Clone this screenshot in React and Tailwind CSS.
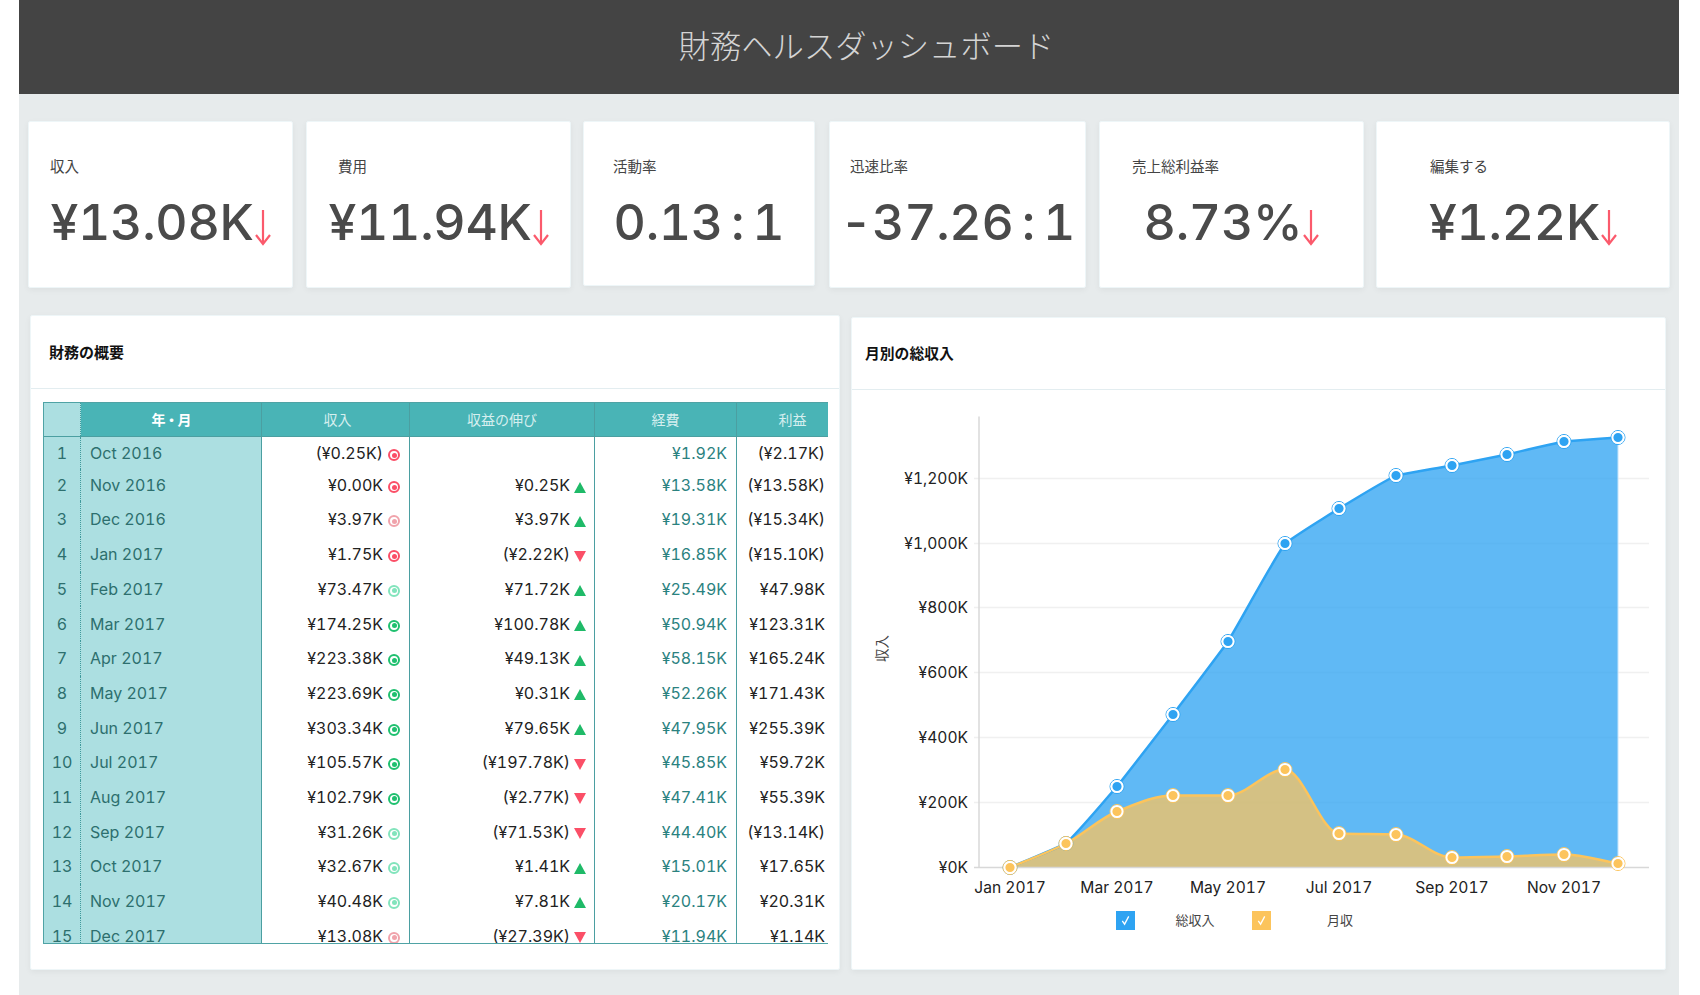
import React from "react";

const rows = [
  ["Oct 2016", "(¥0.25K)", "r", "", "", "¥1.92K", "(¥2.17K)"],
  ["Nov 2016", "¥0.00K", "r", "¥0.25K", "u", "¥13.58K", "(¥13.58K)"],
  ["Dec 2016", "¥3.97K", "lr", "¥3.97K", "u", "¥19.31K", "(¥15.34K)"],
  ["Jan 2017", "¥1.75K", "r", "(¥2.22K)", "d", "¥16.85K", "(¥15.10K)"],
  ["Feb 2017", "¥73.47K", "lg", "¥71.72K", "u", "¥25.49K", "¥47.98K"],
  ["Mar 2017", "¥174.25K", "g", "¥100.78K", "u", "¥50.94K", "¥123.31K"],
  ["Apr 2017", "¥223.38K", "g", "¥49.13K", "u", "¥58.15K", "¥165.24K"],
  ["May 2017", "¥223.69K", "g", "¥0.31K", "u", "¥52.26K", "¥171.43K"],
  ["Jun 2017", "¥303.34K", "g", "¥79.65K", "u", "¥47.95K", "¥255.39K"],
  ["Jul 2017", "¥105.57K", "g", "(¥197.78K)", "d", "¥45.85K", "¥59.72K"],
  ["Aug 2017", "¥102.79K", "g", "(¥2.77K)", "d", "¥47.41K", "¥55.39K"],
  ["Sep 2017", "¥31.26K", "lg", "(¥71.53K)", "d", "¥44.40K", "(¥13.14K)"],
  ["Oct 2017", "¥32.67K", "lg", "¥1.41K", "u", "¥15.01K", "¥17.65K"],
  ["Nov 2017", "¥40.48K", "lg", "¥7.81K", "u", "¥20.17K", "¥20.31K"],
  ["Dec 2017", "¥13.08K", "lr", "(¥27.39K)", "d", "¥11.94K", "¥1.14K"],
];

const xs = [1010, 1066, 1117, 1173, 1228, 1285, 1339, 1396, 1452, 1507, 1564, 1618];
const blue = [867, 843, 786, 714, 641, 543, 508, 475, 465, 454, 441, 437];
const orange = [867, 843, 811, 795, 795, 769, 833, 834, 857, 856, 854, 863];
const ticks = [
  ["¥1,200K", 478],
  ["¥1,000K", 543],
  ["¥800K", 607],
  ["¥600K", 672],
  ["¥400K", 737],
  ["¥200K", 802],
];
const xLabels = [
  ["Jan 2017", 1010],
  ["Mar 2017", 1117],
  ["May 2017", 1228],
  ["Jul 2017", 1339],
  ["Sep 2017", 1452],
  ["Nov 2017", 1564],
];

function curve(px, py, t) {
  const n = px.length;
  const d = [];
  const m = [];
  for (let i = 0; i < n - 1; i++) d.push((py[i + 1] - py[i]) / (px[i + 1] - px[i]));
  m[0] = d[0];
  m[n - 1] = d[n - 2];
  for (let i = 1; i < n - 1; i++) m[i] = d[i - 1] * d[i] <= 0 ? 0 : (2 * d[i - 1] * d[i]) / (d[i - 1] + d[i]);
  let s = `M${px[0]} ${py[0]}`;
  for (let i = 0; i < n - 1; i++) {
    const h = (px[i + 1] - px[i]) / 3;
    const a = m[i] * t + d[i] * (1 - t);
    const b = m[i + 1] * t + d[i] * (1 - t);
    s += ` C${px[i] + h} ${py[i] + a * h} ${px[i + 1] - h} ${py[i + 1] - b * h} ${px[i + 1]} ${py[i + 1]}`;
  }
  return s;
}

function DownArrow() {
  return (
    <svg viewBox="0 0 16 36" className="ml-[1px] mt-[11px] h-[36px] w-[16px] shrink-0" fill="none" stroke="#fb5a6c" strokeWidth="2.2">
      <path d="M8 0V34" />
      <path d="M1 25L8 34L15 25" />
    </svg>
  );
}

function Metric({ label, value, arrow, cls, pl }) {
  return (
    <div className={`rounded-[2px] border border-[#eef6f8] bg-white shadow-[0_2px_6px_rgba(0,0,0,0.05)] ${cls}`}>
      <div className={`mt-[35px] h-[20px] text-[14.5px] leading-[20px] text-[#444444] ${pl}`}>{label}</div>
      <div className="mt-[15px] flex h-[60px] items-center justify-center whitespace-nowrap text-[50px] font-medium leading-[60px] tracking-[-0.3px] text-[#4a4a4a] [word-spacing:-5px]">
        <span>{value}</span>
        {arrow && <DownArrow />}
      </div>
    </div>
  );
}

function Indicator({ kind }) {
  const c = {
    r: "border-[#fb4f67]",
    lr: "border-[#f0a3ab]",
    g: "border-[#1fc06f]",
    lg: "border-[#82e4bc]",
  }[kind];
  const b = {
    r: "bg-[#fb4f67]",
    lr: "bg-[#f0a3ab]",
    g: "bg-[#1fc06f]",
    lg: "bg-[#82e4bc]",
  }[kind];
  return (
    <span className={`ml-[5px] mt-[4px] flex h-[12px] w-[12px] shrink-0 items-center justify-center rounded-full border-2 ${c}`}>
      <span className={`h-[5px] w-[5px] rounded-full ${b}`} />
    </span>
  );
}

function Tri({ dir }) {
  return dir === "u" ? (
    <svg viewBox="0 0 12 11" className="ml-[4px] mt-[4px] h-[11px] w-[12px] shrink-0">
      <path d="M6 0L12 11H0Z" fill="#1fba68" />
    </svg>
  ) : (
    <svg viewBox="0 0 12 11" className="ml-[4px] mt-[4px] h-[11px] w-[12px] shrink-0">
      <path d="M0 0H12L6 11Z" fill="#fb4f67" />
    </svg>
  );
}

const gridCols = "grid grid-cols-[37px_181px_148px_185px_142px_91px]";
const heights = ["h-[32px]", "h-[32px]", "h-[36px]"];

function Table() {
  return (
    <div className="mx-[12px] mt-[13px] h-[542px] w-[785px] overflow-hidden border-b border-l border-t border-[#4fa3a5]">
      <div className={`${gridCols} h-[34px] border-b border-[#4b9fa1] text-[14px]`}>
        <div className="bg-[#acdfe1] border-r border-dotted border-[#3f9a9c]" />
        <div className="flex items-center justify-center border-r border-[#4b9fa1] bg-[#49b4b6] font-bold tracking-[-1px] text-white">年・月</div>
        <div className="flex items-center justify-center border-r border-[#4b9fa1] bg-[#49b4b6] pl-[4px] text-[#d6efef]">収入</div>
        <div className="flex items-center justify-center border-r border-[#4b9fa1] bg-[#49b4b6] text-[#d6efef]">収益の伸び</div>
        <div className="flex items-center justify-center border-r border-[#4b9fa1] bg-[#49b4b6] text-[#d6efef]">経費</div>
        <div className="flex items-center justify-center bg-[#49b4b6] pl-[20px] text-[#d6efef]">利益</div>
      </div>
      {rows.map((r, i) => (
        <div key={i} className={`${gridCols} ${heights[i] || "h-[34.67px]"} text-[16px]`}>
          <div className="flex items-center justify-center border-r border-dotted border-[#3f9a9c] bg-[#acdfe1] text-[#2d6f6e]">{i + 1}</div>
          <div className="flex items-center border-r border-[#4b9fa1] bg-[#acdfe1] pl-[9px] text-[#2d6f6e]">{r[0]}</div>
          <div className="flex items-center justify-end border-r border-[#4b9fa1] pr-[9px] text-[#222222]">
            <span>{r[1]}</span>
            <Indicator kind={r[2]} />
          </div>
          <div className="flex items-center justify-end border-r border-[#4b9fa1] pr-[8px] text-[#222222]">
            {r[3] && <span>{r[3]}</span>}
            {r[4] && <Tri dir={r[4]} />}
          </div>
          <div className="flex items-center justify-end border-r border-[#4b9fa1] pr-[9px] text-[#2b827f]">{r[5]}</div>
          <div className="flex items-center justify-end pr-[3px] text-[#222222]">{r[6]}</div>
        </div>
      ))}
    </div>
  );
}

function Marker({ x, y, color }) {
  return (
    <g>
      <circle cx={x} cy={y} r="7" fill="none" stroke={color} strokeWidth="1" />
      <circle cx={x} cy={y} r="5.6" fill={color} stroke="#ffffff" strokeWidth="2" />
    </g>
  );
}

function Chart() {
  const blueLine = curve(xs, blue, 0.25);
  const orangeLine = curve(xs, orange, 1);
  return (
    <svg viewBox="852 389.5 813 510" className="block h-[510px] w-[813px]">
      {ticks.map(([t, y]) => (
        <line key={t} x1="974" x2="1649" y1={y} y2={y} stroke="#f0f0f0" strokeWidth="1.5" />
      ))}
      <path d={`${blueLine} L1618 867 L1010 867 Z`} fill="#2ea3f2" fillOpacity="0.76" />
      <line x1="1618" x2="1618" y1="437" y2="867" stroke="#c4e4fb" strokeWidth="1" />
      <path d={`${orangeLine} L1618 867 L1010 867 Z`} fill="#fcc45c" fillOpacity="0.74" />
      <line x1="979" x2="979" y1="416" y2="867" stroke="#d8d8d8" strokeWidth="1.5" />
      <line x1="974" x2="1649" y1="867" y2="867" stroke="#d8d8d8" strokeWidth="1.5" />
      <path d={blueLine} fill="none" stroke="#2ea3f2" strokeWidth="2.5" />
      <path d={orangeLine} fill="none" stroke="#fcc45c" strokeWidth="2.5" />
      {xs.map((x, i) => (
        <Marker key={x} x={x} y={blue[i]} color="#2ea3f2" />
      ))}
      {xs.map((x, i) => (
        <Marker key={x} x={x} y={orange[i]} color="#fcc45c" />
      ))}
      {ticks.map(([t, y]) => (
        <text key={t} x="968" y={y + 5.5} textAnchor="end" fontSize="15.6" fill="#222222">{t}</text>
      ))}
      <text x="968" y="872.5" textAnchor="end" fontSize="15.6" fill="#222222">¥0K</text>
      {xLabels.map(([t, x]) => (
        <text key={t} x={x} y="892" textAnchor="middle" fontSize="15.6" fill="#222222">{t}</text>
      ))}
      <text x="0" y="0" fontSize="13.5" fill="#444444" textAnchor="middle" transform="translate(882 648) rotate(-90) translate(0 5)">収入</text>
    </svg>
  );
}

function Legend() {
  const Box = ({ cls }) => (
    <span className={`flex h-[19px] w-[19px] items-center justify-center ${cls}`}>
      <svg viewBox="0 0 12 12" className="h-[11px] w-[11px]" fill="none" stroke="#ffffff" strokeWidth="1.4">
        <path d="M2.5 6.5L5 10L9.5 1.5" />
      </svg>
    </span>
  );
  return (
    <div className="mt-[11px] flex items-center pl-[264px] text-[13px] text-[#444444]">
      <Box cls="bg-[#2ea3f2]" />
      <span className="w-[117px] pl-[3px] text-center">総収入</span>
      <Box cls="bg-[#fcc45c]" />
      <span className="w-[138px] text-center">月収</span>
    </div>
  );
}

export default function App() {
  return (
    <div className="h-[995px] w-[1700px] overflow-hidden bg-white font-['Inter','Noto_Sans_CJK_JP',sans-serif] tabular-nums">
      <div className="ml-[19px] h-[995px] w-[1660px] bg-[#e7ebec]">
        <header className="flex h-[94px] items-center justify-center bg-[#444444] pl-[35px] text-[31.3px] font-light text-[#d4d4d4]">
          財務ヘルスダッシュボード
        </header>
        <div className="ml-[9px] mt-[27px] flex items-start">
          <Metric cls="h-[167px] w-[265px]" pl="pl-[21px]" label="収入" value="¥13.08K" arrow />
          <Metric cls="ml-[13px] h-[167px] w-[265px]" pl="pl-[31px]" label="費用" value="¥11.94K" arrow />
          <Metric cls="ml-[12px] h-[165px] w-[232px]" pl="pl-[29px]" label="活動率" value="0.13 : 1" />
          <Metric cls="ml-[14px] h-[167px] w-[257px]" pl="pl-[20px]" label="迅速比率" value="-37.26 : 1" />
          <Metric cls="ml-[13px] h-[167px] w-[265px]" pl="pl-[32px]" label="売上総利益率" value="8.73%" arrow />
          <Metric cls="ml-[12px] h-[167px] w-[294px]" pl="pl-[53px]" label="編集する" value="¥1.22K" arrow />
        </div>
        <div className="ml-[11px] mt-[27px] flex items-start">
          <section className="h-[655px] w-[810px] rounded-[2px] border border-[#eef6f8] bg-white shadow-[0_2px_6px_rgba(0,0,0,0.05)]">
            <div className="flex h-[73px] items-center border-b border-[#e3edf0] pl-[18px] pt-[3px] text-[15px] font-bold text-[#111111]">財務の概要</div>
            <Table />
          </section>
          <section className="ml-[11px] mt-[2px] h-[653px] w-[815px] rounded-[2px] border border-[#eef6f8] bg-white shadow-[0_2px_6px_rgba(0,0,0,0.05)]">
            <div className="flex h-[72px] items-center border-b border-[#e3edf0] pl-[13px] pt-[2px] text-[14.8px] font-bold text-[#111111]">月別の総収入</div>
            <Chart />
            <Legend />
          </section>
        </div>
      </div>
    </div>
  );
}
